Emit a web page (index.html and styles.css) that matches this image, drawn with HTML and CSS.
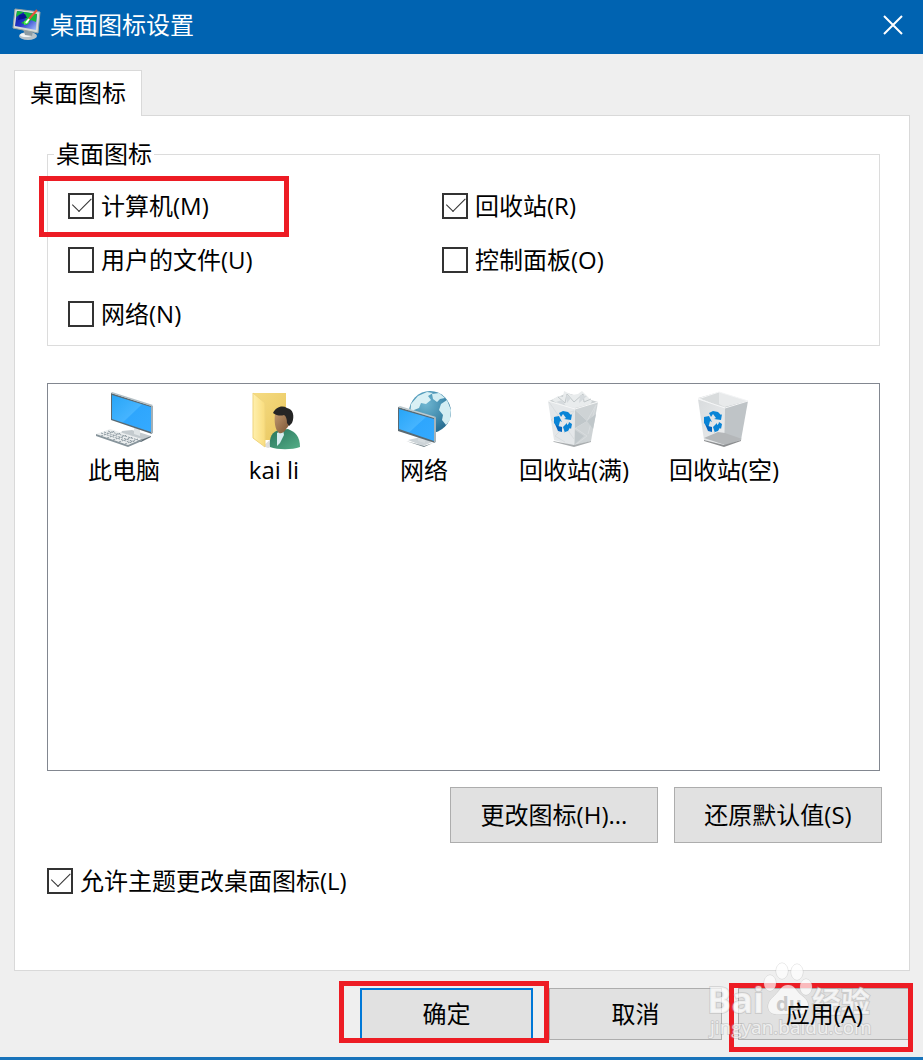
FILE: index.html
```html
<!DOCTYPE html>
<html lang="zh-CN">
<head>
    <meta charset="UTF-8">
    <meta name="viewport" content="width=device-width, initial-scale=1.0">
    <title>桌面图标设置</title>
    <link rel="stylesheet" href="styles.css">
</head>
<body>
    <div class="dialog">
        <header class="titlebar">
            <svg class="app-icon" width="30" height="34" viewBox="0 0 30 34">
                <defs>
                    <linearGradient id="appScreen" x1="0" y1="0" x2="1" y2="1">
                        <stop offset="0" stop-color="#0716a0"/>
                        <stop offset="0.5" stop-color="#2438c8"/>
                        <stop offset="1" stop-color="#a8c4ff"/>
                    </linearGradient>
                </defs>
                <ellipse cx="16" cy="28" rx="9" ry="4" fill="#b9c3c8"/>
                <ellipse cx="14" cy="27" rx="6" ry="2" fill="#f3f5f5"/>
                <path d="M11 21l10 2-1 5-7-1z" fill="#8e9ca3"/>
                <path d="M3 1l25 3-2 21L1 20z" fill="#d8ddd9" stroke="#98a4a4"/>
                <path d="M5 3l20 3-1 16L3 18z" fill="url(#appScreen)"/>
                <path d="M12 4l13 2-1 8-5-2-4 5-6-2 5-3-2-3z" fill="#14b83c"/>
                <path d="M5 3l7 1-5 3-3 2z" fill="#14b83c"/>
                <path d="M7 7l6-1 2 4-9 2z" fill="#06138f"/>
                <path d="M12 13l4-1 1 3-5 2z" fill="#4bea47"/>
                <path d="M25 2l-8 9" stroke="#e8533c" stroke-width="2"/>
                <path d="M17 11l-3 4" stroke="#fff" stroke-width="2"/>
            </svg>
            <h1>桌面图标设置</h1>
            <button class="close" aria-label="关闭">
                <svg width="20" height="20" viewBox="0 0 20 20">
                    <path d="M1 1l18 18M19 1L1 19" stroke="#fff" stroke-width="2"/>
                </svg>
            </button>
        </header>

        <main class="content">
            <div class="tabs" role="tablist">
                <button class="tab" role="tab" aria-selected="true">桌面图标</button>
            </div>

            <section class="panel">
                <fieldset class="group">
                    <legend>桌面图标</legend>
                    <div class="options">
                        <label class="check"><input type="checkbox" checked>计算机(M)<span class="mark mark-computer"></span></label>
                        <label class="check"><input type="checkbox" checked>回收站(R)</label>
                        <label class="check"><input type="checkbox">用户的文件(U)</label>
                        <label class="check"><input type="checkbox">控制面板(O)</label>
                        <label class="check"><input type="checkbox">网络(N)</label>
                    </div>
                </fieldset>

                <ul class="icon-list">
                    <li>
                        <svg width="60" height="60" viewBox="0 0 60 60">
                            <defs>
                                <linearGradient id="screen" x1="0" y1="0" x2="1" y2="1">
                                    <stop offset="0" stop-color="#27a5f7"/>
                                    <stop offset="0.5" stop-color="#45b4ff"/>
                                    <stop offset="0.52" stop-color="#2ea6fd"/>
                                    <stop offset="1" stop-color="#35aaff"/>
                                </linearGradient>
                            </defs>
                            <path d="M28 41l10-1 19 6-10 5-20-8z" fill="#c3cace"/>
                            <path d="M27 43l20 7 10-4v1l-10 5-20-8z" fill="#5d6b73"/>
                            <path d="M40 37l6 2v7l-6-2z" fill="#dfe4e6"/>
                            <path d="M17 3l41 13v28L17 30z" fill="#5a6971"/>
                            <path d="M57 15l2 1v27l-2 1z" fill="#a3b0b7"/>
                            <path d="M17 3l1-1 41 13-2 1z" fill="#b4c0c6"/>
                            <path d="M18 5l39 12v25L18 29z" fill="url(#screen)"/>
                            <path d="M2 44l14-5 32 10-14 6z" fill="#eceff0"/>
                            <path d="M2 44l32 11 14-6v2l-14 6L2 46z" fill="#87949b"/>
                            <path d="M7 43l31 10M10 42l31 10M14 41l30 9M7 46l14-5M13 48l14-5M19 50l14-5M25 52l14-5M31 54l13-5" stroke="#919da4" stroke-dasharray="2 1"/>
                        </svg>
                        <span>此电脑</span>
                    </li>
                    <li>
                        <svg width="60" height="60" viewBox="0 0 60 60">
                            <defs>
                                <linearGradient id="folder" x1="0" y1="0" x2="1" y2="1">
                                    <stop offset="0" stop-color="#f6dc83"/>
                                    <stop offset="1" stop-color="#e8c65e"/>
                                </linearGradient>
                                <linearGradient id="flap" x1="0" y1="0" x2="1" y2="0">
                                    <stop offset="0" stop-color="#fff0ae"/>
                                    <stop offset="1" stop-color="#f9dc7c"/>
                                </linearGradient>
                                <linearGradient id="face" x1="0" y1="0" x2="1" y2="1">
                                    <stop offset="0" stop-color="#c29b71"/>
                                    <stop offset="1" stop-color="#775031"/>
                                </linearGradient>
                                <linearGradient id="shirt" x1="0" y1="0" x2="1" y2="1">
                                    <stop offset="0" stop-color="#28745c"/>
                                    <stop offset="1" stop-color="#55ae87"/>
                                </linearGradient>
                            </defs>
                            <path d="M19 56l9-8 8 6-12 4z" fill="#ddd"/>
                            <path d="M9 3h33v47H15z" fill="url(#folder)"/>
                            <path d="M9 3l12 10v44L9 48z" fill="url(#flap)" stroke="#efd47d"/>
                            <path d="M26 57c-1-10 2-16 10-17l8-1c7 3 12 7 12 18-8 3-22 3-30 0z" fill="url(#shirt)"/>
                            <path d="M33 43l6-3 1 5-4 8-3 3z" fill="#d8edf0"/>
                            <path d="M31 24c4-4 13-4 16 3 0 6-3 10-5 12-2 4-5 5-7 4-4-3-5-12-4-19z" fill="url(#face)"/>
                            <path d="M29 23c3-6 9-8 14-5 6 1 8 8 5 15l-3 3-2-3c0-4-1-7-3-8-3 1-7 1-11-2z" fill="#252525"/>
                        </svg>
                        <span>kai li</span>
                    </li>
                    <li>
                        <svg width="60" height="60" viewBox="0 0 60 60">
                            <defs>
                                <radialGradient id="globe" cx="0.4" cy="0.3" r="0.7">
                                    <stop offset="0" stop-color="#70b7d2"/>
                                    <stop offset="0.6" stop-color="#438daf"/>
                                    <stop offset="1" stop-color="#286d91"/>
                                </radialGradient>
                            </defs>
                            <circle cx="36" cy="22" r="21" fill="url(#globe)"/>
                            <path d="M17 14l7-8 9-4 6 1-5 3 3 4-5 4-5-1-2 5-5 2-4 5z" fill="#d9f0f5"/>
                            <path d="M38 4l7-1 6 5-5 1-3 3-4-3zM47 14l6-4 4 10-1 10-4 5-4-5 1-5-4-5z" fill="#d3edf3"/>
                            <path d="M14 50l13-3 11 5-9 4z" fill="#cdd4d8"/>
                            <path d="M12 51l18 5 9-3-9 4z" fill="#718087"/>
                            <path d="M24 44l7 3v6l-7-2z" fill="#d6dcdf"/>
                            <path d="M4 17l37 11v25L4 41z" fill="#5a6971"/>
                            <path d="M40 28l2-1v25l-2 1z" fill="#a6b4bb"/>
                            <path d="M4 17l2-1 36 11-2 1z" fill="#becacf"/>
                            <path d="M5 19l35 10v22L5 39z" fill="url(#screen)"/>
                        </svg>
                        <span>网络</span>
                    </li>
                    <li>
                        <svg width="60" height="60" viewBox="0 0 60 60">
                            <path d="M5 11l18-8 31 9-24 7z" fill="#cbd0d2"/>
                            <path d="M8 10l6-4 5 1 1-6 8 4 6-1 4-3 5 5 5 5-2 4-17 4-12-3z" fill="#e9eced"/>
                            <path d="M14 7l7 6 2-9 7 8 9-8 1 8 7-3" fill="none" stroke="#c2c8ca"/>
                            <path d="M22 5l5 3-4 5zM36 5l7 1-8 7zM12 12l6-2 4 6z" fill="#d5dadd"/>
                            <path d="M4 11l27 7-1 38-20-6z" fill="#e4e7e9"/>
                            <path d="M31 18l23-6-7 39-17 5z" fill="#ced3d5"/>
                            <path d="M5 12l9 13-7 5 12 8-8 8 10 6M14 25l16-4-9 15 9 13M31 20l12 11-12 7 12 8-12 9M43 31l9-16-8 29" fill="none" stroke="#d9dddf"/>
                            <path d="M31 20l12 11-12 7zM43 31l9-7-3 15zM31 40l9 6-9 8z" fill="#c0c7ca"/>
                            <path d="M9 51l21 4 17-4v1l-17 5-20-5z" fill="#a9adaf"/>
                            <path d="M4 11l27 8 23-7" fill="none" stroke="#f6f7f7"/>
                            <g fill="#0984d6">
                                <path d="M15 23l4-2 5 1 3 3 1-1-1 6-7-1 2-1-3-4-2 3z"/>
                                <path d="M10 27l5-1 3 6-2-1-1 4-1 3-4-5v-4z"/>
                                <path d="M19 37l4-4v2l3-2 1 3-3 5-3 1v1z"/>
                            </g>
                            <path d="M11 34l3 2 4 1v5l-4-1z" fill="#0767be"/>
                            <path d="M25 32l3 2-1 5-3-3z" fill="#0984d6"/>
                        </svg>
                        <span>回收站(满)</span>
                    </li>
                    <li>
                        <svg width="60" height="60" viewBox="0 0 60 60">
                            <defs>
                                <linearGradient id="binLeft" x1="0" y1="0" x2="1" y2="1">
                                    <stop offset="0" stop-color="#d8dbdd"/>
                                    <stop offset="1" stop-color="#eceeef"/>
                                </linearGradient>
                            </defs>
                            <path d="M4 8l21-6 29 9-23 7z" fill="#d9dcdd"/>
                            <path d="M25 2l29 9-23 6-6-3z" fill="#e8eaeb"/>
                            <path d="M4 9l27 8-1 39-20-6z" fill="url(#binLeft)"/>
                            <path d="M31 17l23-6-7 39-17 6z" fill="#bfc4c7"/>
                            <path d="M10 48l14-6 7 1 17 6-17 6z" fill="#b4b7b9"/>
                            <path d="M10 50l20 5 17-5v1l-17 6-20-6z" fill="#8c8e90"/>
                            <path d="M4 9l21-7 29 9-23 7z" fill="none" stroke="#f4f5f6"/>
                            <g fill="#0984d6">
                                <path d="M15 23l4-2 5 1 3 3 1-1-1 6-7-1 2-1-3-4-2 3z"/>
                                <path d="M10 27l5-1 3 6-2-1-1 4-1 3-4-5v-4z"/>
                                <path d="M19 37l4-4v2l3-2 1 3-3 5-3 1v1z"/>
                            </g>
                            <path d="M11 34l3 2 4 1v5l-4-1z" fill="#0767be"/>
                            <path d="M25 32l3 2-1 5-3-3z" fill="#0984d6"/>
                        </svg>
                        <span>回收站(空)</span>
                    </li>
                </ul>

                <div class="icon-actions">
                    <button class="btn">更改图标(H)...</button>
                    <button class="btn">还原默认值(S)</button>
                </div>

                <label class="check"><input type="checkbox" checked>允许主题更改桌面图标(L)</label>
            </section>
        </main>

        <footer class="footer">
            <div class="action">
                <button class="btn btn-default"><span>确定</span></button>
                <span class="mark mark-ok"></span>
            </div>
            <div class="action">
                <button class="btn"><span>取消</span></button>
            </div>
            <div class="action">
                <button class="btn"><span>应用(A)</span></button>
                <span class="mark mark-apply"></span>
            </div>
            <svg class="watermark" width="170" height="86" viewBox="0 0 170 86">
                <g class="wm-shape">
                    <ellipse cx="75" cy="14" rx="6" ry="8"/>
                    <ellipse cx="90" cy="15" rx="6" ry="8"/>
                    <ellipse cx="63" cy="26" rx="6" ry="8"/>
                    <ellipse cx="99" cy="30" rx="6" ry="8"/>
                    <path d="M81 28c6 0 8 5 12 9 5 4 9 7 8 13-1 8-7 8-20 7-13 1-19 1-20-7 0-6 4-9 8-13s6-9 12-9z"/>
                </g>
                <text class="wm-name" x="0" y="56">Bai</text>
                <text class="wm-du" x="69" y="54">du</text>
                <text class="wm-cn" x="105" y="56">经验</text>
                <text class="wm-url" x="3" y="77">jingyan.baidu.com</text>
            </svg>
        </footer>
    </div>
</body>
</html>
```

FILE: styles.css
```css
* {
    margin: 0;
    padding: 0;
    box-sizing: border-box;
}

body {
    font-family: "Open Sans", "Noto Sans CJK SC", sans-serif;
    font-size: 24px;
    line-height: 32px;
    color: #000;
    background: #efefef;
}

button {
    font: inherit;
    color: inherit;
}

.dialog {
    display: flex;
    flex-direction: column;
    min-height: 100vh;
    border-bottom: 3px solid #1873ba;
}

/* Title bar */
.titlebar {
    display: flex;
    align-items: center;
    height: 54px;
    padding: 0 20px 4px 12px;
    background: #0063b1;
    color: #fff;
}

.titlebar h1 {
    flex: 1;
    margin-left: 8px;
    font-size: 24px;
    font-weight: 400;
}

.close {
    display: flex;
    border: none;
    background: none;
    cursor: pointer;
}

/* Tabs and page */
.content {
    flex: 1;
    display: flex;
    flex-direction: column;
    padding: 16px 13px 0 14px;
}

.tabs {
    display: flex;
}

.tab {
    position: relative;
    height: 46px;
    padding: 0 15px 2px;
    border: 1px solid #d9d9d9;
    border-bottom: none;
    background: #fff;
    margin-bottom: -1px;
}

.panel {
    flex: 1;
    padding: 22px 27px 32px 32px;
    border: 1px solid #d9d9d9;
    background: #fff;
}

.group {
    margin-right: 2px;
    padding: 0 20px 15px;
    border: 1px solid #dcdcdc;
}

.group legend {
    margin-left: -14px;
    padding: 0 2px;
}

.options {
    display: grid;
    grid-template-columns: 374px 1fr;
    row-gap: 22px;
    padding-top: 20px;
}

.check {
    position: relative;
    display: flex;
    align-items: center;
    gap: 7px;
}

.check input {
    appearance: none;
    position: relative;
    flex: none;
    width: 26px;
    height: 26px;
    border: 2px solid #333;
    background: #fff;
}

.check input:checked::before {
    content: "";
    position: absolute;
    left: -1px;
    top: -1px;
    width: 9px;
    height: 17px;
    border: solid #333;
    border-width: 0 1px 1px 0;
    transform: rotate(45deg);
    transform-origin: 100% 100%;
}

/* Desktop icon previews */
.icon-list {
    display: flex;
    flex-wrap: wrap;
    align-content: flex-start;
    min-height: 388px;
    margin: 37px 2px 16px 0;
    padding: 6px 1px;
    border: 1px solid #828790;
    list-style: none;
}

.icon-list li {
    display: flex;
    flex-direction: column;
    align-items: center;
    gap: 4px;
    width: 150px;
}

.icon-actions {
    display: flex;
    justify-content: flex-end;
    gap: 16px;
    margin-bottom: 22px;
}

.btn {
    height: 52px;
    border: 1px solid #adadad;
    background: #e1e1e1;
    cursor: pointer;
}

.icon-actions .btn {
    width: 208px;
    height: 56px;
}

/* Bottom buttons */
.footer {
    position: relative;
    display: flex;
    justify-content: flex-end;
    gap: 16px;
    padding: 17px 12px;
}

.action {
    position: relative;
}

.action .btn {
    display: block;
    width: 173px;
}

/* captions stay above the watermark */
.action .btn span {
    position: relative;
    z-index: 1;
}

.btn-default {
    border: 2px solid #0078d7;
}

/* Red frames drawn round the controls to click */
.mark {
    position: absolute;
    border: 5px solid #ed1c24;
    pointer-events: none;
}

.mark-computer {
    inset: -14px auto -15px -29px;
    width: 250px;
}

.mark-ok {
    inset: -7px -16px -3px -21px;
}

.mark-apply {
    inset: -5px -2px -12px -9px;
}

.watermark {
    position: absolute;
    right: 46px;
    bottom: 14px;
    pointer-events: none;
    fill: rgba(255, 255, 255, 0.7);
    stroke: rgba(150, 150, 150, 0.3);
    stroke-width: 2px;
    paint-order: stroke;
}

.wm-shape {
    stroke-width: 1px;
}

.wm-name {
    font-size: 36px;
    font-weight: 700;
}

.wm-du {
    font-size: 20px;
    font-weight: 700;
    fill: #c8c8c8;
    stroke: none;
}

.wm-cn {
    font-size: 29px;
    font-weight: 700;
}

.wm-url {
    font-size: 19px;
}
```
